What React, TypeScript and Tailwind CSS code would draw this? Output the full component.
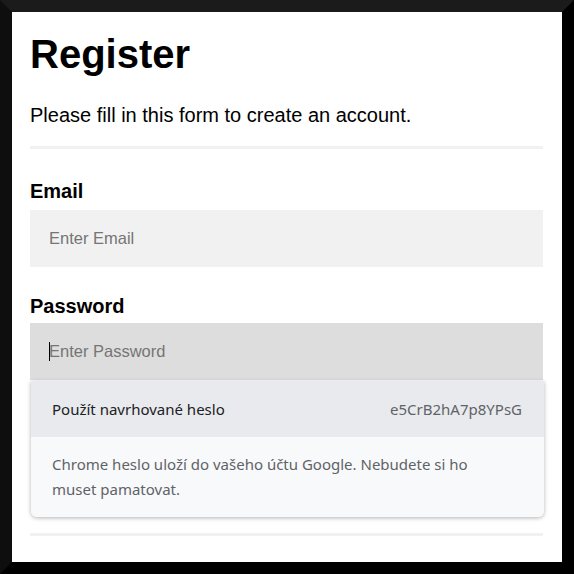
import React from "react";

export default function App() {
  return (
    <div className="w-[574px] h-[574px] border-[12px] border-t-[#1b1b1b] border-l-[#0e0e0e] border-r-black border-b-black bg-white overflow-hidden">
      <div className="relative pl-[18px] pr-[19px] pt-[19px] font-['Liberation_Sans',Arial,sans-serif] text-black">
        <h1 className="text-[40px] leading-[46px] font-bold">Register</h1>
        <p className="mt-[27px] text-[20px] leading-[23px]">Please fill in this form to create an account.</p>
        <div className="mt-[19px] h-[3px] bg-[#f1f1f1]" />
        <label className="block mt-[31px] text-[20px] leading-[23px] font-bold">Email</label>
        <div className="mt-[7px] h-[57px] bg-[#f1f1f1] flex items-center pl-[19px] text-[16.5px] text-[#757575]">
          Enter Email
        </div>
        <label className="block mt-[28px] text-[20px] leading-[23px] font-bold">Password</label>
        <div className="mt-[5px] h-[57px] bg-[#dddddd] flex items-center pl-[19px] text-[16.5px] text-[#757575]">
          <span className="w-px h-[19px] bg-black mr-[-1px]" />
          Enter Password
        </div>
        <div className="h-[153px]" />
        <div className="h-[3px] bg-[#f1f1f1]" />

        <div className="absolute left-[19px] right-[18px] top-[369px] rounded-b-[6px] overflow-hidden shadow-[0_1px_4px_rgba(0,0,0,0.3)] font-['Noto_Sans','Open_Sans',sans-serif]">
          <div className="h-[56px] bg-[#e8eaed] flex items-center justify-between pl-[21px] pr-[22px] text-[15px]">
            <span className="text-[#202124]">Použít navrhované heslo</span>
            <span className="text-[#5f6368]">e5CrB2hA7p8YPsG</span>
          </div>
          <div className="bg-[#f8f9fa] pl-[21px] pr-[22px] pt-[15px] pb-[15px] text-[15px] leading-[25px] text-[#5f6368]">
            <p className="max-w-[440px]">Chrome heslo uloží do vašeho účtu Google. Nebudete si ho muset pamatovat.</p>
          </div>
        </div>
      </div>
    </div>
  );
}
